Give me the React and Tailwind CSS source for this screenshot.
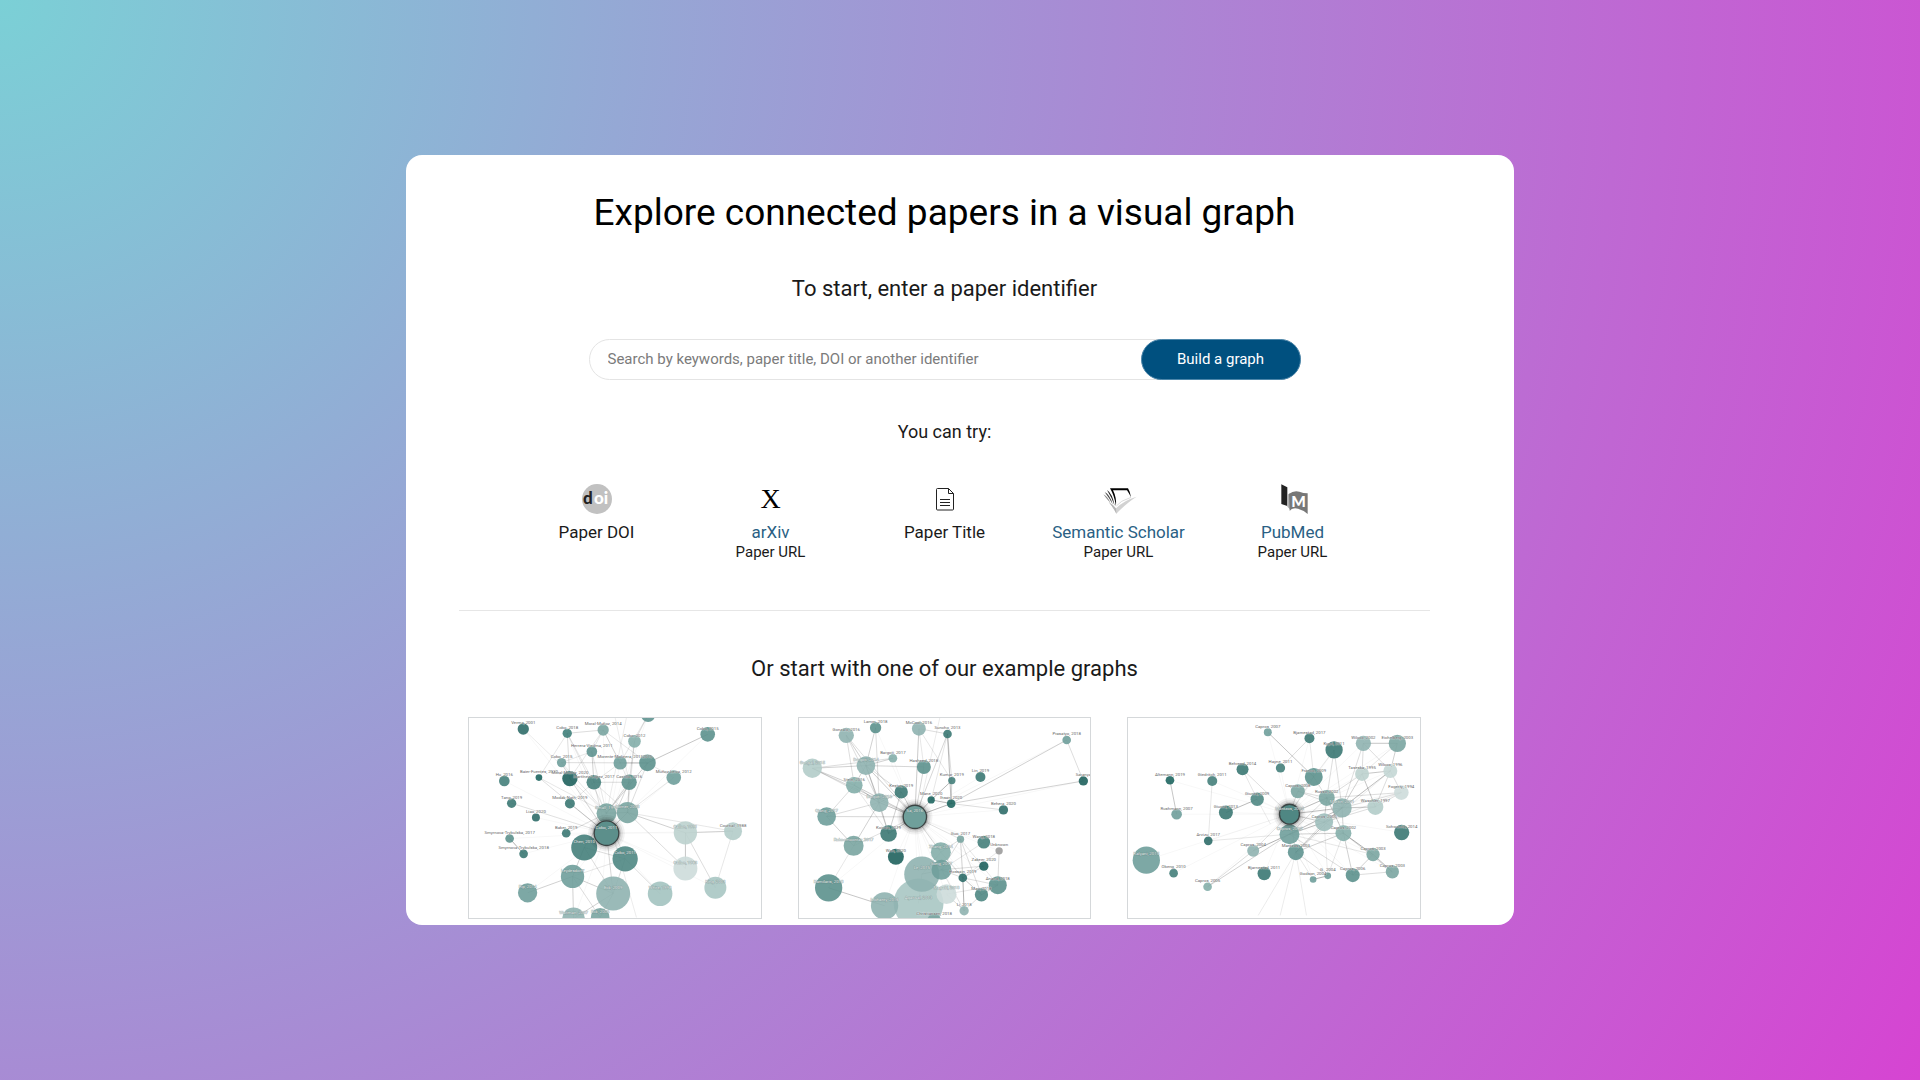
import React, { useState } from 'react';

// node: [x, y, radius, colour, label]
// edge: [from, to, strength]
const graphs = [
    {
        title: 'Science mapping',
        hub: 21,
        nodes: [
            [190, 54, 17, '#2f6d69', 'Verma, 2001'],
            [322, 67, 14, '#3f7f7a', 'Cobo, 2018'],
            [430, 57, 17, '#7aa5a1', 'Moral-Muñoz, 2014'],
            [565, 12, 21, '#5f9490', ''],
            [524, 91, 19, '#84aeaa', 'Cobo, 2012'],
            [744, 70, 22, '#5c918d', 'Cobo, 2015'],
            [396, 122, 16, '#5f9490', 'Herrera-Viedma, 2011'],
            [305, 155, 14, '#6f9f9b', 'Cobo, 2015'],
            [481, 156, 20, '#6f9f9b', 'Morente-Molinera, 2015'],
            [563, 156, 25, '#5c918d', '2015'],
            [237, 200, 10, '#1f6660', 'Baier-Fuentes, 2020'],
            [330, 203, 23, '#1f625d', 'Moral-Muñoz, 2020'],
            [402, 214, 22, '#457f7b', 'Martínez-López, 2017'],
            [508, 214, 23, '#5c918d', 'Castillo, 2016'],
            [642, 200, 22, '#6f9f9b', 'Muñoz-Leiva, 2012'],
            [133, 210, 16, '#457f7b', 'Hu, 2016'],
            [155, 277, 14, '#3b7873', 'Tang, 2019'],
            [330, 278, 15, '#3b7873', 'Modak-Nath, 2019'],
            [228, 320, 12, '#2f6d69', 'Liao, 2020'],
            [440, 307, 30, '#7aa5a1', 'Small, 1999'],
            [503, 305, 32, '#7aa5a1', 'Börner, 2003'],
            [440, 367, 37, '#5c8f8b', 'Cobo, 2011'],
            [319, 367, 13, '#3b7873', 'Baker, 2019'],
            [149, 383, 13, '#5c918d', 'Smyrnova-Trybulska, 2017'],
            [191, 429, 13, '#3b7873', 'Smyrnova-Trybulska, 2018'],
            [373, 410, 39, '#457f7b', 'Chen, 2010'],
            [496, 444, 38, '#4f8783', 'Cobo, 2011'],
            [677, 366, 35, '#bcd1ce', 'Callon, 1991'],
            [820, 361, 27, '#b3ccc9', 'Courtial, 1988'],
            [677, 473, 36, '#cddcda', 'Callon, 1983'],
            [338, 497, 35, '#6f9f9b', 'Leydesdorff'],
            [203, 546, 29, '#6f9f9b', 'Rip, 2014'],
            [460, 548, 51, '#8fb3b0', 'Eck, 2009'],
            [601, 549, 37, '#a3c3c0', 'White, 1998'],
            [767, 531, 33, '#a9c6c3', 'King, 2003'],
            [341, 624, 34, '#8fb3b0', 'Waltman, 2007'],
            [421, 620, 28, '#7aa5a1', 'Eck, 2006'],
        ],
        edges: [
            [5, 9, 4], [23, 24, 6], [6, 12, 3], [1, 11, 2], [1, 10, 1], [1, 12, 1], [1, 2, 2], [1, 19, 1],
            [2, 8, 3], [2, 6, 1], [2, 11, 1], [2, 9, 1], [4, 3, 2], [4, 13, 2], [4, 20, 1], [3, 8, 1],
            [6, 7, 1], [6, 19, 1], [7, 9, 2], [7, 19, 1], [7, 11, 1], [8, 9, 3], [8, 13, 1], [8, 12, 1],
            [9, 20, 2], [9, 19, 3], [9, 14, 1], [10, 21, 1], [10, 19, 1], [11, 19, 1], [11, 21, 2],
            [12, 13, 2], [12, 20, 1], [12, 21, 1], [13, 19, 3], [13, 20, 3], [13, 21, 2], [14, 20, 1],
            [17, 21, 2], [17, 12, 1], [19, 20, 4], [19, 22, 2], [19, 25, 2], [19, 26, 1], [20, 27, 3],
            [20, 29, 2], [20, 21, 3], [20, 28, 1], [27, 28, 3], [27, 29, 4], [27, 34, 2], [28, 34, 1],
            [21, 32, 2], [25, 30, 3], [25, 32, 2], [25, 26, 2], [26, 30, 1], [26, 32, 2], [26, 33, 2],
            [30, 31, 3], [30, 32, 3], [30, 35, 3], [30, 36, 2], [32, 35, 3], [32, 36, 3], [16, 21, 1],
        ],
        strays: ['M190 54L322 180', 'M466 20L508 214', 'M500 20L440 307', 'M450 340L530 620'],
    },
    {
        title: 'Deep learning',
        hub: 20,
        nodes: [
            [169, 73, 23, '#8fb3b0', 'Gonzalo, 2016'],
            [257, 50, 17, '#5c918d', 'Lamm, 2018'],
            [387, 53, 21, '#8fb3b0', 'McCool, 2016'],
            [473, 69, 13, '#3b7873', 'Suncho, 2013'],
            [831, 87, 13, '#6f9f9b', 'Prasatyo, 2018'],
            [881, 210, 14, '#1f625d', 'Saranya'],
            [309, 142, 13, '#84aeaa', 'Bargoti, 2017'],
            [402, 168, 21, '#5c918d', 'Hasheed, 2018'],
            [67, 172, 29, '#b3ccc9', 'Gongal, 2015'],
            [228, 164, 28, '#8fb3b0', 'Bargoti, 2014'],
            [486, 209, 11, '#457f7b', 'Kumar, 2019'],
            [572, 198, 15, '#3b7873', 'Lin, 2019'],
            [193, 223, 25, '#84aeaa', 'Stein, 2016'],
            [334, 243, 20, '#3b7873', 'Kestur, 2019'],
            [268, 275, 28, '#8fb3b0', 'Bargoti, 2016'],
            [424, 267, 11, '#1f6660', 'Mane, 2020'],
            [484, 278, 13, '#1f6660', 'Ihsan, 2020'],
            [641, 297, 14, '#2f6d69', 'Behera, 2020'],
            [110, 317, 28, '#6f9f9b', 'Qiang, 2017'],
            [296, 368, 25, '#3b7873', 'Koirala, 2019'],
            [375, 318, 35, '#6f9f9b', 'Sa, 2016'],
            [191, 405, 30, '#7aa5a1', 'Rahnemoonfar, 2017'],
            [318, 438, 24, '#1f625d', 'Wan, 2020'],
            [512, 385, 11, '#7aa5a1', 'Guo, 2017'],
            [582, 394, 19, '#457f7b', 'Wang, 2018'],
            [628, 420, 11, '#9b9b9b', 'Unknown'],
            [453, 424, 30, '#84aeaa', 'Zhang, 2014'],
            [582, 466, 14, '#1f625d', 'Zakeer, 2020'],
            [396, 490, 53, '#8fb3b0', 'Le, 2015'],
            [455, 477, 30, '#6f9f9b', 'Song, 2017'],
            [519, 501, 13, '#2f6d69', 'Hossain, 2019'],
            [624, 523, 27, '#5c918d', 'Anand, 2018'],
            [575, 552, 20, '#4f8783', 'Mao, 2018'],
            [470, 550, 30, '#cddcda', 'Magabi, 2018'],
            [116, 531, 41, '#5c918d', 'Kamilaris, 2018'],
            [284, 585, 41, '#8fb3b0', 'Mohanty, 2016'],
            [386, 578, 75, '#a9c6c3', 'Agarwal, 2013'],
            [523, 600, 14, '#8fb3b0', 'Li, 2018'],
            [433, 628, 20, '#7aa5a1', 'Christiansen, 2018'],
        ],
        edges: [
            [4, 16, 3], [5, 16, 3], [4, 5, 2], [3, 16, 5], [3, 10, 2], [2, 3, 2], [2, 20, 3], [2, 10, 1],
            [2, 7, 1], [3, 20, 2], [3, 15, 1], [10, 15, 5], [10, 16, 3], [15, 16, 5], [16, 20, 5],
            [15, 20, 3], [16, 17, 2], [0, 9, 3], [0, 12, 2], [0, 14, 2], [0, 20, 1], [1, 9, 3],
            [1, 14, 2], [6, 9, 3], [8, 9, 3], [8, 12, 3], [8, 20, 2], [8, 6, 2], [8, 14, 2], [9, 12, 3],
            [9, 14, 4], [9, 20, 3], [9, 19, 2], [9, 13, 2], [12, 18, 2], [12, 14, 3], [12, 20, 3],
            [12, 19, 1], [13, 14, 3], [13, 19, 3], [13, 20, 3], [14, 20, 4], [14, 21, 3], [14, 18, 2],
            [14, 19, 3], [18, 20, 2], [18, 21, 3], [19, 20, 4], [20, 21, 1], [21, 34, 1], [34, 35, 4],
            [20, 26, 2], [20, 23, 1], [23, 30, 3], [23, 26, 2], [23, 32, 2], [23, 31, 1], [23, 29, 2],
            [27, 29, 2], [27, 30, 2], [25, 31, 2], [25, 30, 1], [30, 37, 6], [30, 32, 4], [30, 31, 2],
            [30, 29, 2], [24, 29, 1], [29, 28, 4], [26, 28, 2], [28, 36, 2], [31, 32, 3], [32, 37, 2],
            [33, 37, 2], [33, 31, 1], [29, 37, 1], [26, 30, 2], [7, 20, 2], [7, 9, 1],
        ],
        strays: ['M228 164L402 168', 'M450 20L387 300'],
    },
    {
        title: 'Energy demand',
        hub: 13,
        nodes: [
            [447, 64, 12, '#6f9f9b', 'Capros, 2007'],
            [572, 82, 15, '#3b7873', 'Bjarnestad, 2017'],
            [646, 117, 26, '#3b7873', 'Kypri, 2011'],
            [734, 97, 23, '#8fb3b0', 'Wilcox, 2002'],
            [836, 97, 26, '#7aa5a1', 'Eichelberg, 2003'],
            [371, 175, 18, '#3b7873', 'Behrend, 2014'],
            [485, 171, 14, '#457f7b', 'Hayne, 2011'],
            [585, 198, 27, '#5c918d', 'Franco, 2009'],
            [153, 208, 13, '#1f6660', 'Altemann, 2019'],
            [280, 210, 15, '#457f7b', 'Giedritch, 2011'],
            [537, 241, 21, '#7aa5a1', 'Capros, 2008'],
            [415, 265, 20, '#4f8783', 'Giunta, 2009'],
            [321, 305, 21, '#3b7873', 'Giunta, 2013'],
            [512, 310, 30, '#4f8783', 'Mantzos, 2005'],
            [173, 310, 16, '#6f9f9b', 'Rushmann, 2007'],
            [624, 261, 24, '#7aa5a1', 'Russo, 2002'],
            [670, 291, 29, '#8fb3b0', 'Martin, 2001'],
            [616, 334, 27, '#9dbebb', 'Capros, 2000'],
            [512, 370, 30, '#6f9f9b', 'Capros, 2005'],
            [674, 367, 24, '#84aeaa', 'Capros, 2002'],
            [730, 189, 21, '#bcd1ce', 'Taseska, 1995'],
            [815, 180, 21, '#c4d7d5', 'Wilcox, 1996'],
            [848, 245, 22, '#cddcda', 'Fogerty, 1994'],
            [770, 288, 24, '#b3ccc9', 'Waschler, 1997'],
            [849, 365, 23, '#3b7873', 'Schwanitz, 2014'],
            [268, 390, 13, '#2f6d69', 'Arvizu, 2017'],
            [403, 420, 18, '#8fb3b0', 'Capros, 2004'],
            [531, 424, 24, '#5f9490', 'Mantzos, 2003'],
            [763, 431, 20, '#7aa5a1', 'Capros, 2003'],
            [821, 483, 20, '#7aa5a1', 'Capros, 2003'],
            [702, 493, 21, '#5c918d', 'Capros, 2006'],
            [627, 495, 10, '#6f9f9b', 'G., 2004'],
            [583, 506, 10, '#6f9f9b', 'Godson, 2004'],
            [436, 488, 20, '#3b7873', 'Bjarnestad, 2011'],
            [82, 448, 41, '#6f9f9b', 'Kalyani, 2015'],
            [164, 487, 13, '#457f7b', 'Obeng, 2010'],
            [266, 528, 13, '#84aeaa', 'Capros, 2005'],
        ],
        edges: [
            [0, 7, 4], [1, 6, 2], [1, 7, 1], [2, 15, 2], [2, 16, 2], [3, 4, 4], [3, 21, 2], [3, 20, 2],
            [3, 16, 2], [4, 21, 3], [4, 20, 1], [8, 14, 4], [11, 12, 5], [5, 13, 1], [5, 11, 1],
            [9, 25, 1], [20, 21, 4], [20, 23, 4], [20, 16, 3], [20, 15, 2], [21, 22, 2], [21, 23, 2],
            [21, 16, 3], [21, 17, 1], [22, 23, 2], [22, 16, 2], [22, 15, 2], [23, 16, 4], [23, 17, 2],
            [15, 16, 3], [15, 13, 4], [15, 17, 3], [15, 18, 2], [16, 13, 4], [16, 17, 4], [16, 18, 5],
            [16, 19, 3], [17, 13, 3], [17, 18, 5], [17, 19, 2], [17, 27, 2], [19, 18, 3], [19, 15, 4],
            [19, 28, 6], [19, 30, 3], [19, 31, 1], [19, 27, 3], [28, 29, 5], [28, 30, 3], [19, 29, 2],
            [29, 30, 2], [30, 18, 2], [31, 32, 6], [27, 31, 2], [27, 32, 1], [18, 26, 6], [18, 36, 3],
            [26, 13, 1], [26, 36, 2], [7, 13, 1], [7, 10, 2], [10, 16, 2], [10, 13, 2], [10, 15, 2],
            [27, 16, 4], [27, 13, 1], [18, 28, 1], [25, 18, 1], [7, 15, 2], [2, 7, 1],
        ],
        strays: [
            'M531 424L418 614', 'M531 424L484 614', 'M531 424L563 614', 'M415 265L455 340',
            'M815 180L531 424', 'M848 245L616 334', 'M627 495L616 334',
        ],
    },
];

const DoiIcon = () => (
    <svg viewBox="0 0 30 30" className="w-[30px] h-[30px]" aria-hidden="true">
        <circle cx="15" cy="15" r="15" fill="#c1c1c1" />
        <text x="1" y="20" fontFamily="Lato" fontWeight="900" fontSize="17" fill="#222222">d</text>
        <text x="12" y="20" fontFamily="Lato" fontWeight="900" fontSize="17" fill="#ffffff">oi</text>
    </svg>
);

const TitleIcon = () => (
    <svg viewBox="0 0 30 30" className="w-[30px] h-[30px]" fill="none" stroke="#222222" aria-hidden="true">
        <path d="M6.5 5.5Q6.5 4.5 7.5 4.5H18.5L23.5 9.5V25Q23.5 26 22.5 26H7.5Q6.5 26 6.5 25Z" />
        <path d="M18.5 4.5V9.5H23.5" />
        <path d="M10 15.5H20M10 18.5H20M10 21.5H20" />
    </svg>
);

const ScholarIcon = () => (
    <svg viewBox="489 38 90 90" className="w-[30px] h-[30px] overflow-visible" aria-hidden="true">
        <path d="M503 92Q516 100 525 111Q550 86 587 76Q560 92 526 127Q518 110 503 92Z" fill="#d2d2d2" />
        <path d="M525 112L526 127Q518 110 503 92Q517 100 525 112Z" fill="#b5b5b5" />
        <path d="M487 69Q499 75 508 94Q497 83 487 69Z" fill="#888888" />
        <path d="M491 62Q507 70 515 99Q505 80 491 62Z" fill="#444444" />
        <path d="M498 56Q514 66 521 103Q513 80 498 56Z" fill="#222222" />
        <path d="M507 51H561Q568 62 570 78Q564 66 558 57H516Q527 78 525 105Q520 72 507 51Z" fill="#000000" />
        <path d="M570 78L542 90L526 104" fill="none" stroke="#c8c8c8" strokeWidth="2" />
    </svg>
);

const PubMedIcon = () => (
    <svg viewBox="1012 38 90 90" className="w-[30px] h-[30px]" aria-hidden="true">
        <path d="M1022 39L1040 48V104L1022 98Z" fill="#222222" />
        <path d="M1040 70L1050 64V118Q1046 110 1040 106Z" fill="#b0b0b0" />
        <path d="M1045 68Q1058 57 1076 61Q1088 66 1101 66V128Q1088 116 1072 112Q1056 108 1047 118Z" fill="#777777" />
        <text x="1052" y="107" fontFamily="Lato" fontWeight="900" fontSize="46" fill="#ffffff">M</text>
    </svg>
);

const ArxivIcon = () => (
    <span className="font-['Liberation_Serif',serif] text-[28px] leading-[30px] text-black" aria-hidden="true">X</span>
);

const sources = [
    { id: 'doi', icon: <DoiIcon />, title: 'Paper DOI' },
    { id: 'arxiv', icon: <ArxivIcon />, title: 'arXiv', link: '#arxiv', note: 'Paper URL' },
    { id: 'title', icon: <TitleIcon />, title: 'Paper Title' },
    { id: 'scholar', icon: <ScholarIcon />, title: 'Semantic Scholar', link: '#scholar', note: 'Paper URL' },
    { id: 'pubmed', icon: <PubMedIcon />, title: 'PubMed', link: '#pubmed', note: 'Paper URL' },
];

const GraphPreview = ({ graph }) => {
    const { nodes, edges, strays, hub, title } = graph;
    const [hx, hy, hr] = nodes[hub];
    // big papers go behind the small ones
    const circles = nodes.filter((_, i) => i !== hub).sort((a, b) => b[2] - a[2]);

    return (
        <svg viewBox="27 21 876 603" className="block w-full" role="img" aria-label={title}>
            {/* faint links from the origin paper */}
            {nodes.map(([x, y], i) => (
                <path key={i} d={`M${hx} ${hy}L${x} ${y}`} stroke="#000000" strokeWidth="2" strokeOpacity="0.05" />
            ))}
            {strays.map((d) => (
                <path key={d} d={d} stroke="#000000" strokeWidth="2" strokeOpacity="0.12" />
            ))}
            {edges.map(([a, b, strength]) => (
                <path
                    key={`${a}-${b}`}
                    d={`M${nodes[a][0]} ${nodes[a][1]}L${nodes[b][0]} ${nodes[b][1]}`}
                    stroke="#333333"
                    strokeWidth="2"
                    strokeOpacity={0.1 + strength * 0.08}
                />
            ))}
            {circles.map(([x, y, r, color]) => (
                <circle key={`${x}-${y}`} cx={x} cy={y} r={r} fill={color} fillOpacity="0.9" />
            ))}
            <circle cx={hx} cy={hy} r={hr + 18} fill="#000000" fillOpacity="0.05" />
            <circle cx={hx} cy={hy} r={hr + 12} fill="#000000" fillOpacity="0.08" />
            <circle cx={hx} cy={hy} r={hr + 6} fill="#000000" fillOpacity="0.15" />
            <circle cx={hx} cy={hy} r={hr} fill={nodes[hub][3]} stroke="#3c4444" strokeWidth="4" />
            {nodes.map(([x, y, r, , label], i) => (
                <text
                    key={i}
                    x={x}
                    y={y - 14}
                    textAnchor="middle"
                    fontSize="13"
                    fill={r > 27 ? '#e8eeed' : '#666666'}
                    stroke={r > 27 ? '#55706e' : '#ffffff'}
                    strokeWidth="2"
                    strokeOpacity="0.5"
                    paintOrder="stroke"
                >
                    {label}
                </text>
            ))}
        </svg>
    );
};

const App = () => {
    const [query, setQuery] = useState('');

    return (
        <div className="min-h-screen flex items-center justify-center bg-[radial-gradient(circle_at_top_left,#7bd0d6,#d644d2)] font-['Roboto',sans-serif] text-[#1a1a1a]">
            <main className="w-full max-w-[1108px] bg-white rounded-2xl overflow-hidden pt-[34px] pb-[6px] pl-[53px] pr-[84px]">
                <h1 className="text-center text-[37px] leading-[48px] text-black">
                    Explore connected papers in a visual graph
                </h1>
                <h2 className="mt-[38px] text-center text-[22px] leading-7">To start, enter a paper identifier</h2>

                <form
                    className="mt-9 mx-auto max-w-[712px] h-[41px] flex rounded-full border border-[#e4e4e4]"
                    onSubmit={(e) => e.preventDefault()}
                >
                    <input
                        type="text"
                        aria-label="Paper identifier"
                        placeholder="Search by keywords, paper title, DOI or another identifier"
                        value={query}
                        onChange={(e) => setQuery(e.target.value)}
                        className="flex-1 min-w-0 pl-[18px] text-[15px] bg-transparent outline-none placeholder:text-[#7b7b7b]"
                    />
                    <button
                        type="submit"
                        className="w-40 -m-px rounded-full border border-[#4c86aa] bg-[#00507f] text-white text-[15px] cursor-pointer"
                    >
                        Build a graph
                    </button>
                </form>

                <p className="mt-[38px] text-center text-[18px] leading-7">You can try:</p>

                <ul className="mt-[38px] flex justify-center">
                    {sources.map((source) => (
                        <li key={source.id} className="w-[174px] flex flex-col items-center text-center">
                            <div className="h-[30px]">{source.icon}</div>
                            {source.link ? (
                                <a href={source.link} className="mt-2 text-[17px] leading-5 text-[#2a5f84]">{source.title}</a>
                            ) : (
                                <span className="mt-2 text-[17px] leading-5">{source.title}</span>
                            )}
                            {source.note && <span className="text-[15px] leading-5">{source.note}</span>}
                        </li>
                    ))}
                </ul>

                <hr className="mt-12 border-[#e6e6e6]" />

                <h2 className="mt-11 text-center text-[22px] leading-7">Or start with one of our example graphs</h2>

                <div className="mt-[34px] px-[9px] grid grid-cols-3 gap-9">
                    {graphs.map((graph) => (
                        <a key={graph.title} href="#graph" className="border border-[#d5d8da]">
                            <GraphPreview graph={graph} />
                        </a>
                    ))}
                </div>
            </main>
        </div>
    );
};

export default App;
